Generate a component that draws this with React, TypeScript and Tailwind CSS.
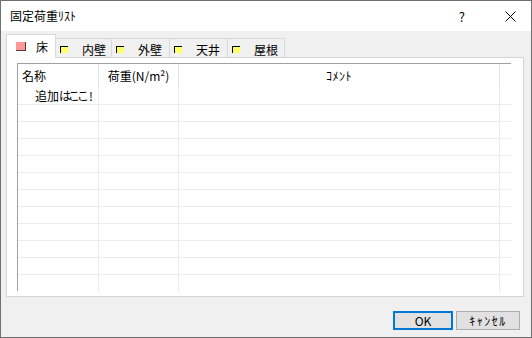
import React from "react";

const font = { fontFamily: '"Noto Sans CJK JP", "Noto Sans", sans-serif' };

const tabs = [
  { label: "内壁", width: "w-[56px]" },
  { label: "外壁", width: "w-[58px]" },
  { label: "天井", width: "w-[58px]" },
  { label: "屋根", width: "w-[57px]" },
];

function Row({ first }: { first?: boolean }) {
  return (
    <div className="flex h-[17px] shrink-0 border-b border-[#ececec]">
      <div className="flex w-[81px] items-center justify-end border-r border-[#ebebeb] pr-[5px] leading-none">
        {first ? (
          <>
            追加<span className="tracking-[-3px]">はここ</span>
            <span className="ml-[3px]">!</span>
          </>
        ) : null}
      </div>
      <div className="w-[80px] border-r border-[#ebebeb]" />
      <div className="w-[321px] border-r border-[#ebebeb]" />
      <div className="w-[11px]" />
    </div>
  );
}

export default function App() {
  return (
    <div
      className="flex h-[338px] w-[532px] flex-col border border-[#707070] text-[12px] text-black"
      style={font}
    >
      {/* title bar */}
      <div className="flex h-[30px] shrink-0 items-center bg-white pl-[9px]">
        <span className="leading-none">固定荷重ﾘｽﾄ</span>
        <span className="ml-auto mr-[40px] text-[13px] leading-none">?</span>
        <svg width="11" height="11" viewBox="0 0 11 11" className="mr-[15px]">
          <path d="M0.5 0.5 L10.5 10.5 M10.5 0.5 L0.5 10.5" stroke="#000" strokeWidth="1" />
        </svg>
      </div>

      <div className="flex flex-1 flex-col bg-[#f0f0f0] px-[5px] pt-[3px]">
        {/* tabs */}
        <div className="relative z-10 flex h-[23px] items-end">
          <div className="mb-[-1px] flex h-[24px] w-[50px] items-center border-x border-t border-[#d9d9d9] bg-white pl-[9px]">
            <span className="h-[9px] w-[10px] shrink-0 border-b border-r border-[#5a3a3a] bg-[#ff9999]" />
            <span className="ml-[10px] leading-none">床</span>
          </div>
          {tabs.map((t) => (
            <div
              key={t.label}
              className={`flex h-[19px] ${t.width} items-center border-r border-t border-[#d9d9d9] pl-[4px] pt-[3px]`}
            >
              <span className="h-[7px] w-[8px] shrink-0 border-l border-t border-black bg-[#ffff66]" />
              <span className="ml-[14px] leading-none">{t.label}</span>
            </div>
          ))}
        </div>

        {/* panel */}
        <div className="h-[240px] w-[518px] border border-[#d5d5d5] bg-white pl-[10px] pt-[5px]">
          <div className="flex h-[228px] w-[494px] flex-col overflow-hidden border-l border-t border-[#a0a0a0]">
            <div className="flex h-[24px] shrink-0">
              <div className="flex w-[81px] items-center border-r border-[#e3e3e3] pl-[4px] leading-none">
                名称
              </div>
              <div className="flex w-[80px] items-center justify-center border-r border-[#e3e3e3] leading-none">
                荷重(N/m²)
              </div>
              <div className="flex w-[321px] items-center justify-center border-r border-[#e3e3e3] leading-none tracking-[0.5px]">
                ｺﾒﾝﾄ
              </div>
              <div className="w-[11px]" />
            </div>
            <Row first />
            {Array.from({ length: 11 }).map((_, i) => (
              <Row key={i} />
            ))}
          </div>
        </div>

        {/* buttons */}
        <div className="mt-[14px] flex justify-end gap-[3px] pr-[6px]">
          <button className="flex h-[19px] w-[60px] items-center justify-center border-2 border-[#0078d7] bg-[#e1e1e1] leading-none">
            OK
          </button>
          <button className="flex h-[19px] w-[64px] items-center justify-center border border-[#adadad] bg-[#e1e1e1] leading-none tracking-[1.5px]">
            ｷｬﾝｾﾙ
          </button>
        </div>
      </div>
    </div>
  );
}
